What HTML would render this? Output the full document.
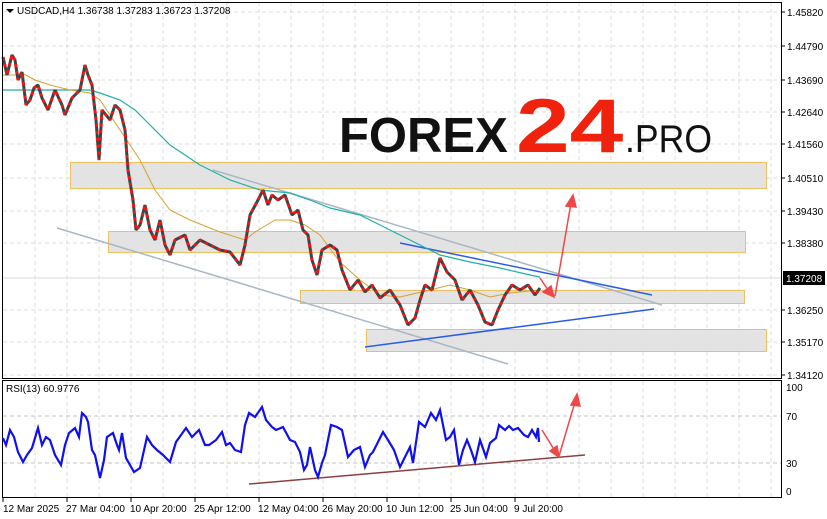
<!DOCTYPE html>
<html><head><meta charset="utf-8"><style>
html,body{margin:0;padding:0;background:#fff;}
svg{display:block;font-family:"Liberation Sans",sans-serif;}
</style></head><body>
<svg width="827" height="519" viewBox="0 0 827 519" xmlns="http://www.w3.org/2000/svg">
<rect width="827" height="519" fill="#fff"/>
<g stroke="#dcdcdc" stroke-dasharray="4 3" stroke-width="1">
<path d="M35 2V378M67 2V378M99 2V378M131 2V378M163 2V378M195 2V378M227 2V378M259 2V378M291 2V378M323 2V378M355 2V378M387 2V378M419 2V378M451 2V378M483 2V378M515 2V378M547 2V378M579 2V378M611 2V378M643 2V378M675 2V378M707 2V378M739 2V378M771 2V378"/>
<path d="M3 12H781M3 46H781M3 80H781M3 112H781M3 144H781M3 178H781M3 211H781M3 243H781M3 310H781M3 342H781M3 375H781"/>
<path d="M35 381V497M67 381V497M99 381V497M131 381V497M163 381V497M195 381V497M227 381V497M259 381V497M291 381V497M323 381V497M355 381V497M387 381V497M419 381V497M451 381V497M483 381V497M515 381V497M547 381V497M579 381V497M611 381V497M643 381V497M675 381V497M707 381V497M739 381V497M771 381V497"/>
</g>
<g stroke="#c0c0c0" stroke-dasharray="4 3"><path d="M3 416H781M3 463H781"/></g>
<line x1="3" y1="278" x2="781" y2="278" stroke="#d8d8d8"/>
<text x="339" y="152" font-size="49" font-weight="bold" fill="#111">FOREX</text>
<text x="516" y="152" font-size="76" font-weight="bold" fill="#f0220e" transform="translate(516 0) scale(1.27 1) translate(-516 0)">24</text>
<text x="625" y="152" font-size="39" fill="#111" textLength="87" lengthAdjust="spacingAndGlyphs">.PRO</text>
<g fill="#e0e0e0" stroke="#f0c060" stroke-width="1" fill-opacity="0.9">
<rect x="70.5" y="162.5" width="696" height="26"/>
<rect x="108.5" y="231.5" width="637" height="21"/>
<rect x="300.5" y="290.5" width="444" height="13"/>
<rect x="366.5" y="329.5" width="400" height="22"/>
</g>
<g stroke="#a9b7c6" stroke-width="1.5"><line x1="57" y1="228" x2="508" y2="364"/><line x1="213" y1="170" x2="662" y2="305"/></g>
<g stroke="#2a5ce8" stroke-width="1.5"><line x1="400" y1="243" x2="652" y2="295"/><line x1="365" y1="347" x2="654" y2="309"/></g>
<polyline fill="none" stroke="#20b0a8" stroke-width="1.2" points="3,90 30,90 60,90 90,90 100,93 120,100 135,110 150,125 170,145 200,165 230,180 260,190 290,193 310,200 330,208 360,215 380,225 410,240 440,255 470,262 500,268 530,275 540,277"/>
<polyline fill="none" stroke="#d9a030" stroke-width="1" points="3,75 15,75 22,73 35,80 50,85 70,90 90,93 100,100 110,115 120,130 130,145 140,160 155,190 170,210 190,220 220,232 245,240 255,232 275,220 290,220 305,225 320,235 340,262 360,280 380,295 400,297 430,290 450,285 470,290 490,297 510,293 540,290"/>
<g fill="none" stroke-width="3" stroke-linejoin="bevel">
<polyline stroke="#2f4a4a" points="3,57 7,75 12,55 15,60 18,80 22,72 26,105 30,100 34,88 38,85 42,98 48,110 55,90 62,105 65,115 72,98 80,90 85,65 88,75 92,85 96,120 99,160 102,110 106,115 110,120 115,105 120,110 125,130 128,170 133,200 136,230 140,225 145,205 150,230 155,240 160,220 165,245 170,255 175,240 185,235 190,250 200,240 210,245 220,250 230,252 240,265 245,245 250,215 258,200 263,190 268,205 272,195 278,200 285,195 292,215 298,210 303,230 308,235 312,260 317,275 322,250 330,245 337,250 342,270 350,290 358,280 365,292 372,285 380,298 390,290 400,305 408,325 415,318 420,300 425,285 432,290 440,258 447,272 455,280 462,300 470,290 478,305 485,322 492,325 498,310 505,295 512,285 520,290 528,285 535,295 540,288"/>
<polyline stroke="#ff1010" stroke-dasharray="3 4" points="3,57 7,75 12,55 15,60 18,80 22,72 26,105 30,100 34,88 38,85 42,98 48,110 55,90 62,105 65,115 72,98 80,90 85,65 88,75 92,85 96,120 99,160 102,110 106,115 110,120 115,105 120,110 125,130 128,170 133,200 136,230 140,225 145,205 150,230 155,240 160,220 165,245 170,255 175,240 185,235 190,250 200,240 210,245 220,250 230,252 240,265 245,245 250,215 258,200 263,190 268,205 272,195 278,200 285,195 292,215 298,210 303,230 308,235 312,260 317,275 322,250 330,245 337,250 342,270 350,290 358,280 365,292 372,285 380,298 390,290 400,305 408,325 415,318 420,300 425,285 432,290 440,258 447,272 455,280 462,300 470,290 478,305 485,322 492,325 498,310 505,295 512,285 520,290 528,285 535,295 540,288"/>
</g>
<g stroke="#f04848" stroke-width="1.5" fill="#f04848">
<line x1="540" y1="278" x2="550" y2="293"/>
<polygon points="554,297 543,292 551,286"/>
<line x1="555" y1="296" x2="571" y2="203"/>
<polygon points="573,195 566,206 576,207"/>
</g>
<rect x="2.5" y="2.5" width="779" height="376" fill="none" stroke="#000"/>
<rect x="2.5" y="380.5" width="779" height="117" fill="none" stroke="#000"/>
<polygon points="6,9 14,9 10,13" fill="#000"/>
<text x="17" y="14" font-size="10" fill="#000">USDCAD,H4  1.36738 1.37283 1.36723 1.37208</text>
<g font-size="10" fill="#000">
<text x="787" y="16">1.45820</text><text x="787" y="50">1.44790</text><text x="787" y="84">1.43690</text><text x="787" y="116">1.42640</text><text x="787" y="148">1.41560</text><text x="787" y="182">1.40510</text><text x="787" y="215">1.39430</text><text x="787" y="247">1.38380</text><text x="787" y="314">1.36250</text><text x="787" y="346">1.35170</text><text x="787" y="379">1.34120</text>
<text x="786" y="391">100</text><text x="786" y="420">70</text><text x="786" y="467">30</text><text x="786" y="495">0</text>
</g>
<g stroke="#000"><path d="M782 12h3M782 46h3M782 80h3M782 112h3M782 144h3M782 178h3M782 211h3M782 243h3M782 310h3M782 342h3M782 375h3"/></g>
<rect x="783" y="271" width="42" height="14" fill="#000"/>
<text x="786" y="282" font-size="10" fill="#fff">1.37208</text>
<text x="6" y="392" font-size="10" fill="#000">RSI(13) 60.9776</text>
<line x1="249" y1="484" x2="585" y2="455" stroke="#8b4040" stroke-width="1.5"/>
<polyline fill="none" stroke="#1010ee" stroke-width="2.2" points="3,438 6,445 10,430 14,437 18,452 23,462 27,455 32,448 38,428 42,445 46,437 50,440 55,455 61,465 65,445 69,433 75,428 79,437 82,413 86,417 88,422 92,450 95,455 100,478 104,460 107,437 113,433 117,445 119,450 122,433 126,458 130,465 134,472 140,468 147,437 152,445 157,450 163,455 170,462 176,442 186,428 192,437 199,430 205,445 209,445 216,440 222,432 226,445 230,443 235,450 241,452 245,425 249,413 255,417 262,407 266,420 272,427 276,430 283,427 290,440 295,442 300,452 304,470 307,465 310,447 315,470 318,477 322,463 325,455 331,425 337,427 342,430 348,457 354,450 360,447 365,467 370,455 373,452 378,442 383,432 388,440 394,450 400,467 406,455 410,447 413,463 419,422 425,427 431,413 436,420 440,410 444,430 446,440 450,437 454,430 459,465 463,450 467,440 471,450 475,462 480,440 486,457 490,443 496,438 499,425 505,430 509,426 513,430 518,428 524,435 528,437 532,430 536,437 538,428 539,442"/>
<g stroke="#f04848" stroke-width="1.5" fill="#f04848">
<line x1="542" y1="430" x2="555" y2="451"/>
<polygon points="559,457 550,451 557,446"/>
<line x1="559" y1="456" x2="575" y2="402"/>
<polygon points="577,394 571,405 580,406"/>
</g>
<g stroke="#000"><path d="M3 498v4M67 498v4M131 498v4M195 498v4M259 498v4M323 498v4M387 498v4M451 498v4M515 498v4"/></g>
<g font-size="10" fill="#000">
<text x="3" y="512">12 Mar 2025</text><text x="66" y="512">27 Mar 04:00</text><text x="130" y="512">10 Apr 20:00</text><text x="194" y="512">25 Apr 12:00</text><text x="258" y="512">12 May 04:00</text><text x="322" y="512">26 May 20:00</text><text x="386" y="512">10 Jun 12:00</text><text x="450" y="512">25 Jun 04:00</text><text x="514" y="512">9 Jul 20:00</text>
</g>
</svg>
</body></html>
